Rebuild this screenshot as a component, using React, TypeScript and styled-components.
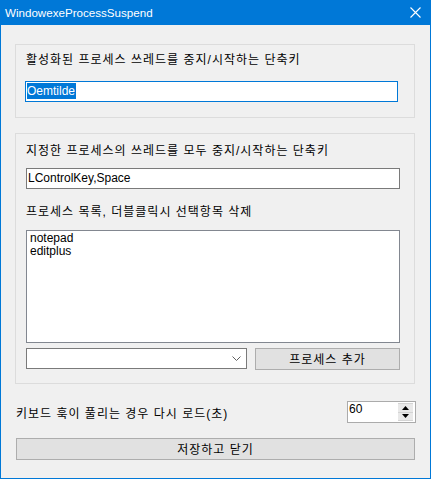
import styled, { createGlobalStyle } from "styled-components";

const GlobalStyle = createGlobalStyle`
  html, body {
    margin: 0;
    padding: 0;
    background: #f0f0f0;
  }

  * {
    box-sizing: border-box;
  }
`;

const Window = styled.div`
  width: 431px;
  height: 479px;
  border: 1px solid #0078d7;
  border-top: none;
  background: #f0f0f0;
  display: flex;
  flex-direction: column;
  font-family: "Liberation Sans", "Noto Sans CJK KR", sans-serif;
  font-size: 12px;
  color: #000;
`;

const TitleBar = styled.div`
  height: 25px;
  margin: 0 -1px;
  background: #0078d7;
  color: #fff;
  display: flex;
  align-items: center;
  justify-content: space-between;
  padding: 0 10px 1px 5px;
  font-size: 11.6px;
`;

const CloseIcon = styled.svg`
  width: 11px;
  height: 11px;
`;

const Body = styled.div`
  flex: 1;
  display: flex;
  flex-direction: column;
  padding: 19px 15px 0 14px;
`;

const GroupBox = styled.div<{ height: number }>`
  height: ${props => props.height}px;
  border: 1px solid #dcdcdc;
  display: flex;
  flex-direction: column;
  padding: 6px 14px 0 10px;
  margin-bottom: 15px;
`;

// hangul in Gulim runs 12px per syllable, Noto CJK is narrower
const Label = styled.div<{ top?: number }>`
  height: 16px;
  line-height: 16px;
  margin-top: ${props => props.top ?? 0}px;
  white-space: nowrap;
  letter-spacing: 1px;
`;

const TextBox = styled.div<{ top: number; focused?: boolean }>`
  height: 21px;
  margin-top: ${props => props.top}px;
  margin-left: ${props => (props.focused ? -1 : 0)}px;
  margin-right: ${props => (props.focused ? 2 : 0)}px;
  border: 1px solid ${props => (props.focused ? "#0078d7" : "#7a7a7a")};
  background: #fff;
  padding: 1px 1px;
  line-height: 17px;
  white-space: nowrap;
`;

const Selected = styled.span`
  display: inline-block;
  background: #0078d7;
  color: #fff;
  line-height: 16px;
  padding-right: 1px;
`;

const ListBox = styled.div`
  height: 113px;
  margin-top: 10px;
  border: 1px solid #828790;
  background: #fff;
  padding: 1px 3px;
  line-height: 13px;
`;

const ActionRow = styled.div`
  display: flex;
  gap: 8px;
  margin-top: 5px;
`;

const ComboBox = styled.div`
  width: 221px;
  height: 21px;
  border: 1px solid #7a7a7a;
  background: #fff;
  display: flex;
  align-items: center;
  justify-content: flex-end;
  padding-right: 5px;
`;

const Button = styled.div`
  height: 22px;
  flex: 1;
  border: 1px solid #adadad;
  background: #e1e1e1;
  display: flex;
  align-items: center;
  justify-content: center;
  padding-bottom: 1px;
  letter-spacing: 1px;
`;

const ReloadRow = styled.div`
  display: flex;
  align-items: center;
  justify-content: space-between;
  margin-top: 2px;
  padding-left: 1px;
`;

const ReloadLabel = styled.span`
  letter-spacing: 1px;
  margin-top: 1px;
`;

const Spinner = styled.div`
  width: 69px;
  height: 22px;
  border: 1px solid #ababab;
  background: #fff;
  display: flex;
  padding: 1px 1px 1px 1px;
  margin-right: -1px;
`;

const SpinValue = styled.div`
  flex: 1;
  line-height: 13px;
`;

const SpinButtons = styled.div`
  width: 15px;
  display: flex;
  flex-direction: column;
  gap: 1px;
  background: #d4d4d4;
  padding: 1px 0;
  margin-right: 1px;
`;

const SpinButton = styled.div`
  flex: 1;
  background: #e9e9e9;
  display: flex;
  align-items: center;
  justify-content: center;
`;

const SaveRow = styled.div`
  margin-top: 15px;
  padding-left: 1px;
  display: flex;
`;

const App = (): JSX.Element => {
  return (
    <>
      <GlobalStyle />
      <Window>
        <TitleBar>
          <span>WindowexeProcessSuspend</span>
          <CloseIcon viewBox="0 0 11 11">
            <path d="M0.5 0.5 L10.5 10.5 M10.5 0.5 L0.5 10.5" stroke="#fff" strokeWidth="1.1" />
          </CloseIcon>
        </TitleBar>
        <Body>
          <GroupBox height={74}>
            <Label top={1}>활성화된 프로세스 쓰레드를 중지/시작하는 단축키</Label>
            <TextBox top={13} focused>
              <Selected>Oemtilde</Selected>
            </TextBox>
          </GroupBox>
          <GroupBox height={251}>
            <Label top={3}>지정한 프로세스의 쓰레드를 모두 중지/시작하는 단축키</Label>
            <TextBox top={9}>LControlKey,Space</TextBox>
            <Label top={15}>프로세스 목록, 더블클릭시 선택항목 삭제</Label>
            <ListBox>
              <div>notepad</div>
              <div>editplus</div>
            </ListBox>
            <ActionRow>
              <ComboBox>
                <svg width="9" height="5" viewBox="0 0 9 5">
                  <path d="M0.5 0.5 L4.5 4.5 L8.5 0.5" stroke="#606060" fill="none" />
                </svg>
              </ComboBox>
              <Button>프로세스 추가</Button>
            </ActionRow>
          </GroupBox>
          <ReloadRow>
            <ReloadLabel>키보드 훅이 풀리는 경우 다시 로드(초)</ReloadLabel>
            <Spinner>
              <SpinValue>60</SpinValue>
              <SpinButtons>
                <SpinButton>
                  <svg width="7" height="4" viewBox="0 0 7 4">
                    <path d="M0 4 L3.5 0 L7 4 Z" fill="#000" />
                  </svg>
                </SpinButton>
                <SpinButton>
                  <svg width="7" height="4" viewBox="0 0 7 4">
                    <path d="M0 0 L3.5 4 L7 0 Z" fill="#000" />
                  </svg>
                </SpinButton>
              </SpinButtons>
            </Spinner>
          </ReloadRow>
          <SaveRow>
            <Button>저장하고 닫기</Button>
          </SaveRow>
        </Body>
      </Window>
    </>
  );
};

export default App;
